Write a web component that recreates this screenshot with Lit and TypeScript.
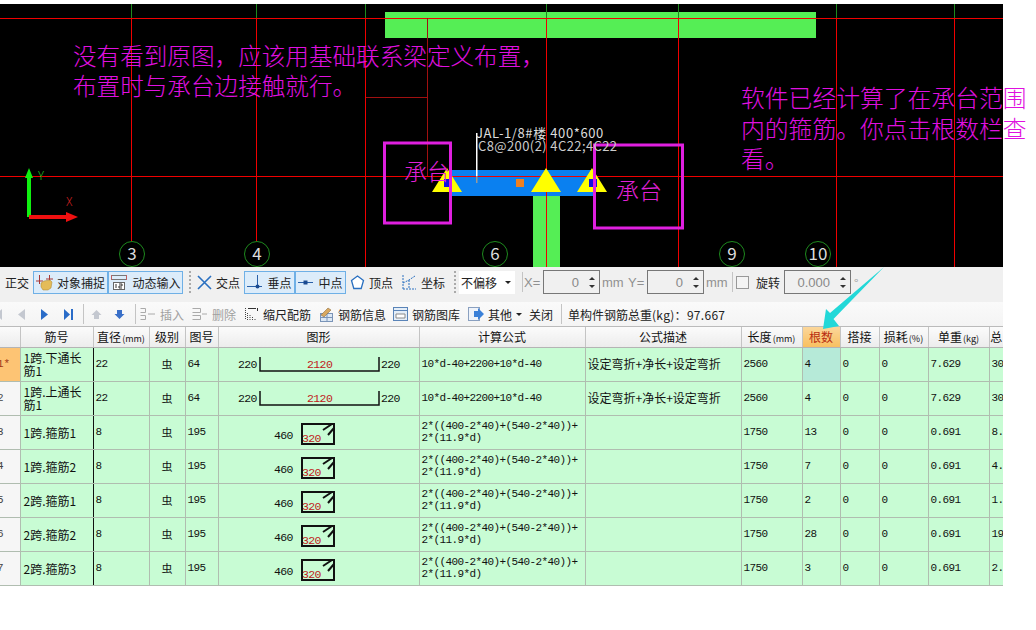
import { LitElement, html, css, svg } from 'lit';
import { customElement } from 'lit/decorators.js';

const columns = [
  { label: '', w: 20 },
  { label: '筋号', w: 73 },
  { label: '直径', unit: '(mm)', w: 56 },
  { label: '级别', w: 36 },
  { label: '图号', w: 33 },
  { label: '图形', w: 201 },
  { label: '计算公式', w: 166 },
  { label: '公式描述', w: 156 },
  { label: '长度', unit: '(mm)', w: 61 },
  { label: '根数', w: 38 },
  { label: '搭接', w: 39 },
  { label: '损耗', unit: '(%)', w: 49 },
  { label: '单重', unit: '(kg)', w: 61 },
  { label: '总', w: 14 },
];

const STIRRUP_FORMULA = ['2*((400-2*40)+(540-2*40))+', '2*(11.9*d)'];

const rows = [
  { no: '1*', name: ['1跨.下通长', '筋1'], dia: 22, fig: 64, bent: true, formula: ['10*d-40+2200+10*d-40'], desc: '设定弯折+净长+设定弯折', len: 2560, count: 4, weight: '7.629', total: '30' },
  { no: '2', name: ['1跨.上通长', '筋1'], dia: 22, fig: 64, bent: true, formula: ['10*d-40+2200+10*d-40'], desc: '设定弯折+净长+设定弯折', len: 2560, count: 4, weight: '7.629', total: '30' },
  { no: '3', name: ['1跨.箍筋1'], dia: 8, fig: 195, bent: false, formula: STIRRUP_FORMULA, desc: '', len: 1750, count: 13, weight: '0.691', total: '8.' },
  { no: '4', name: ['1跨.箍筋2'], dia: 8, fig: 195, bent: false, formula: STIRRUP_FORMULA, desc: '', len: 1750, count: 7, weight: '0.691', total: '4.' },
  { no: '5', name: ['2跨.箍筋1'], dia: 8, fig: 195, bent: false, formula: STIRRUP_FORMULA, desc: '', len: 1750, count: 2, weight: '0.691', total: '1.' },
  { no: '6', name: ['2跨.箍筋2'], dia: 8, fig: 195, bent: false, formula: STIRRUP_FORMULA, desc: '', len: 1750, count: 28, weight: '0.691', total: '19' },
  { no: '7', name: ['2跨.箍筋3'], dia: 8, fig: 195, bent: false, formula: STIRRUP_FORMULA, desc: '', len: 1750, count: 3, weight: '0.691', total: '2.' },
];

const axes = [
  { x: 132, label: '3' },
  { x: 257, label: '4' },
  { x: 495, label: '6' },
  { x: 732, label: '9' },
  { x: 818, label: '10' },
];

// grid lines run green above the top datum, red below it
const gridX = [131.5, 256.5, 365.5, 546.5, 678.5, 836.5, 954.5];

const triangle = (cx: number, top: number) =>
  svg`<polygon points="${cx},${top} ${cx + 15},${top + 24} ${cx - 15},${top + 24}" fill="#ffff00" />`;

@customElement('app-root')
export class AppRoot extends LitElement {
  static styles = css`
    :host {
      display: block;
      position: relative;
      width: 1036px;
      height: 630px;
      padding-top: 4px;
      box-sizing: border-box;
      background: #fff;
      overflow: hidden;
      font-family: 'Noto Sans CJK SC', 'Liberation Sans', sans-serif;
      font-size: 12px;
      color: #222;
    }
    .canvas {
      display: block;
      width: 1003px;
      height: 263px;
      overflow: visible;
    }
    .canvas text {
      font-family: 'Noto Sans CJK SC', sans-serif;
    }
    .note {
      font-size: 23.6px;
      fill: #e010e0;
      font-weight: 300;
    }
    .note.wide {
      font-size: 23.8px;
    }
    .cap {
      font-size: 23px;
      fill: #e020d8;
      font-weight: 300;
    }
    .panel {
      width: 1003px;
    }
    .bar {
      display: flex;
      align-items: center;
      white-space: nowrap;
    }
    .bar1 {
      height: 35px;
      background: #f0f0f0;
      padding: 0 0 5px 5px;
      box-sizing: border-box;
    }
    .bar2 {
      height: 25px;
      background: linear-gradient(#fafafa, #f4f4f4);
      border-bottom: 1px solid #bbb;
      box-sizing: border-box;
      overflow: hidden;
    }
    .tool {
      display: flex;
      align-items: center;
      gap: 4px;
      height: 23px;
      box-sizing: border-box;
      flex: none;
    }
    .on {
      background: #dcecfa;
      border: 1px solid #6fb0e6;
      justify-content: center;
    }
    .dots {
      width: 0;
      height: 22px;
      border-left: 2px dotted #aaa;
      flex: none;
    }
    .sep {
      width: 1px;
      height: 20px;
      background: #c4c4c4;
      flex: none;
    }
    .muted {
      color: #a0a0a0;
    }
    .latin {
      font-family: 'Liberation Sans', sans-serif;
      font-size: 13px;
      color: #909090;
      box-sizing: border-box;
      flex: none;
    }
    .unit {
      width: 28px;
      padding-left: 2px;
    }
    .coord {
      width: 19px;
    }
    .select {
      width: 56px;
      height: 23px;
      background: #fff;
      display: flex;
      align-items: center;
      justify-content: space-between;
      padding: 0 4px 0 2px;
      box-sizing: border-box;
      flex: none;
    }
    .caret {
      width: 0;
      height: 0;
      border-left: 3px solid transparent;
      border-right: 3px solid transparent;
      border-top: 3px solid #222;
    }
    .spin {
      display: flex;
      align-items: center;
      justify-content: flex-end;
      height: 24px;
      border: 1px solid #777;
      background: #f0f0f0;
      box-sizing: border-box;
      color: #888;
      font-family: 'Liberation Sans', sans-serif;
      font-size: 13px;
      flex: none;
    }
    .spin b {
      display: flex;
      flex-direction: column;
      justify-content: center;
      gap: 5px;
      width: 15px;
      align-items: center;
      margin-left: 5px;
    }
    .spin i {
      width: 0;
      height: 0;
      border-left: 3px solid transparent;
      border-right: 3px solid transparent;
    }
    .spin i.up {
      border-bottom: 3px solid #333;
    }
    .spin i.down {
      border-top: 3px solid #333;
    }
    .check {
      width: 11px;
      height: 11px;
      border: 1px solid #999;
      background: #f4f4f4;
      flex: none;
    }
    .total {
      letter-spacing: 0.3px;
    }
    table {
      border-collapse: collapse;
      table-layout: fixed;
      width: 1003px;
      font-family: 'Liberation Mono', 'Noto Sans CJK SC', monospace;
      font-size: 11px;
      letter-spacing: -0.6px;
      color: #111;
    }
    th {
      height: 20px;
      padding: 0;
      overflow: hidden;
      white-space: nowrap;
      font-family: 'Noto Sans CJK SC', sans-serif;
      font-size: 12px;
      font-weight: 400;
      letter-spacing: 0;
      background: linear-gradient(#fbfbfb, #ececec);
      border-right: 1px solid #c4c4c4;
      border-bottom: 1px solid #b4b4b4;
      box-sizing: border-box;
    }
    th small {
      font-size: 9px;
      margin-left: 1px;
    }
    th.hot {
      background: linear-gradient(#fbd69a, #f8c060);
      color: #b82c10;
    }
    td {
      height: 34px;
      padding: 0 0 0 2px;
      overflow: hidden;
      white-space: nowrap;
      background: #c8fcd4;
      border-right: 1px solid #b0bdb0;
      border-bottom: 1px solid #b0bdb0;
      box-sizing: border-box;
      line-height: 12px;
    }
    th:last-child,
    td:last-child {
      border-right: 0;
    }
    td.no {
      background: #f6f6f6;
      padding: 0;
      color: #444;
      text-indent: -3px;
      letter-spacing: 0;
    }
    td.no.active {
      background: #fdc474;
      color: #a03818;
    }
    td.name {
      font-family: 'Noto Sans CJK SC', sans-serif;
      font-size: 12px;
      letter-spacing: 0;
      border-right: 1px solid #111;
      padding-left: 3px;
    }
    td.name div {
      line-height: 13px;
    }
    td.grade {
      text-align: center;
      padding: 0;
      font-family: 'Noto Sans CJK SC', sans-serif;
      font-size: 11px;
      letter-spacing: 0;
    }
    td.zh {
      font-family: 'Noto Sans CJK SC', sans-serif;
      font-size: 12px;
      letter-spacing: 0;
    }
    td.shape {
      padding: 0;
    }
    td.shape svg {
      display: block;
    }
    td.shape text {
      font-family: 'Liberation Mono', monospace;
      font-size: 11.5px;
      letter-spacing: -0.6px;
    }
    td.picked {
      background: #b6ead8;
    }
    .callout {
      position: absolute;
      left: 815px;
      top: 262px;
    }
  `;

  renderCanvas() {
    return html`<svg class="canvas" viewBox="0 4 1003 263">
      <rect x="0" y="4" width="1003" height="263" fill="#000" />
      <rect x="385" y="12" width="431" height="26" fill="#55ee55" />
      <rect x="533" y="196" width="27" height="71" fill="#55ee55" />
      <rect x="451" y="170" width="142" height="26" fill="#0a80f0" />
      ${gridX.map(
        (x) => svg`<path d="M${x} 4V18" stroke="#1e8a1e" fill="none" />
          <path d="M${x} 18V267" stroke="#f00000" fill="none" />`
      )}
      <path d="M0 18.5H1003M0 176.5H1003" stroke="#f00000" fill="none" />
      <path d="M427.5 18V176M366 97.500H427" stroke="#a01010" fill="none" />
      <rect x="476" y="133" width="1.500" height="43" fill="#fff" />
      <rect x="476" y="176" width="1.500" height="7" fill="#999" />
      ${triangle(447, 168)} ${triangle(546, 168)} ${triangle(592, 168)}
      <rect x="444" y="179" width="8" height="8" fill="#1010e0" />
      <rect x="589" y="179" width="8" height="8" fill="#1010e0" />
      <rect x="516" y="179" width="8" height="8" fill="#f08020" />
      <g fill="none" stroke="#e020e0" stroke-width="3">
        <rect x="384.500" y="143" width="66" height="80" />
        <rect x="594.500" y="145" width="88" height="83" />
      </g>
      <text x="476" y="138" font-size="13" fill="#ddd" letter-spacing="0.6">JAL-1/8#楼 400*600</text>
      <text x="478" y="151" font-size="13" fill="#ccc" letter-spacing="0.4">C8@200(2) 4C22;4C22</text>
      <text class="note" x="73" y="65">没有看到原图，应该用基础联系梁定义布置，</text>
      <text class="note" x="73" y="95">布置时与承台边接触就行。</text>
      <text class="note wide" x="741" y="107">软件已经计算了在承台范围</text>
      <text class="note wide" x="741" y="138">内的箍筋。你点击根数栏查</text>
      <text class="note wide" x="741" y="168">看。</text>
      <text class="cap" x="404" y="180">承台</text>
      <text class="cap" x="616" y="199">承台</text>
      <path d="M29 217V176" stroke="#10f010" stroke-width="4" />
      <polygon points="29,168 33,178 25,178" fill="#10f010" />
      <path d="M29 217H70" stroke="#f01010" stroke-width="4" />
      <polygon points="78,217 66,212 66,222" fill="#f01010" />
      <text x="38" y="180" font-size="12" font-weight="300" fill="#20c020">Y</text>
      <text x="66" y="206" font-size="12" font-weight="300" fill="#d02020">X</text>
      ${axes.map(
        (a) => svg`<circle cx="${a.x}" cy="254" r="12.500" fill="#000" stroke="#1e8a1e" />
          <text x="${a.x}" y="260" text-anchor="middle" font-size="17" fill="#ddd">${a.label}</text>`
      )}
    </svg>`;
  }

  renderBar1() {
    return html`<div class="bar bar1">
      <span style="width:28px">正交</span>
      <div class="tool on" style="width:75px">
        <svg width="17" height="17" viewBox="0 0 17 17">
          <path d="M3.500 1v9M13.500 1v6" stroke="#a83838" />
          <path d="M0 7h7M10 5h7" stroke="#a83838" />
          <path d="M5 9l3-2 6-1 2 2-1 6-3 2H7l-2-3z" fill="#e4bc58" stroke="#a88430" stroke-width=".5" />
        </svg>
        对象捕捉
      </div>
      <div class="tool on" style="width:75px">
        <svg width="18" height="16" viewBox="0 0 18 16">
          <path d="M1 1.500h16M1 5.500h16" stroke="#777" />
          <path d="M1.500 1v5M16.500 1v5" stroke="#c06060" />
          <rect x="3.500" y="8.500" width="11" height="7" fill="#fff" stroke="#666" />
          <path d="M6 10v4M9 10h3v2H9v2h3" stroke="#333" fill="none" />
        </svg>
        动态输入
      </div>
      <div class="dots" style="margin:0 6px"></div>
      <div class="tool" style="width:47px">
        <svg width="15" height="15" viewBox="0 0 15 15">
          <path d="M1 1l13 13M14 1L1 14" stroke="#2a70c0" stroke-width="1.600" />
        </svg>
        交点
      </div>
      <div class="tool on" style="width:51px">
        <svg width="16" height="15" viewBox="0 0 16 15">
          <path d="M0 11.500h15M10.500 0v11" stroke="#2a60a8" />
          <circle cx="10.500" cy="11.500" r="2" fill="#1a4a90" />
        </svg>
        垂点
      </div>
      <div class="tool on" style="width:51px">
        <svg width="16" height="15" viewBox="0 0 16 15">
          <path d="M0 7.500h15" stroke="#2a60a8" />
          <rect x="5.500" y="5.500" width="4" height="4" fill="#1a4a90" />
        </svg>
        中点
      </div>
      <div class="tool" style="width:47px;margin-left:4px">
        <svg width="15" height="15" viewBox="0 0 15 15">
          <path d="M7.500 1l6 4.500-2.300 8h-7.400l-2.300-8z" fill="#fff" stroke="#2a70c0" stroke-width="1.300" />
        </svg>
        顶点
      </div>
      <div class="tool" style="width:50px;margin-left:3px">
        <svg width="17" height="16" viewBox="0 0 17 16">
          <path d="M3 1v14M3 15h13M3 9l6-3 6-4M9 6v9" stroke="#2a70c0" stroke-dasharray="2 1" fill="none" />
        </svg>
        坐标
      </div>
      <div class="dots" style="margin:0 3px 0 4px"></div>
      <div class="select">不偏移<span class="caret"></span></div>
      <div class="sep" style="margin:0 1px 0 7px"></div>
      <span class="latin coord">X=</span>
      <div class="spin" style="width:57px">0<b><i class="up"></i><i class="down"></i></b></div>
      <span class="latin unit">mm</span>
      <span class="latin coord">Y=</span>
      <div class="spin" style="width:57px">0<b><i class="up"></i><i class="down"></i></b></div>
      <span class="latin unit">mm</span>
      <div class="sep" style="margin-right:3px"></div>
      <div class="check"></div>
      <span style="margin:0 4px 0 7px">旋转</span>
      <div class="spin" style="width:67px">0.000<b><i class="up"></i><i class="down"></i></b></div>
      <span class="muted" style="margin-left:3px">°</span>
    </div>`;
  }

  renderBar2() {
    return html`<div class="bar bar2">
      <div class="tool" style="width:17px">
        <svg width="10" height="13" viewBox="0 0 10 13" style="margin-left:-8px"><path d="M10 1v11L4 6.500zM3 1H1v11h2z" fill="#c4c8d0" /></svg>
      </div>
      <div class="tool" style="width:23px">
        <svg width="10" height="13" viewBox="0 0 10 13"><path d="M8 1v11L1 6.500z" fill="#c4c8d0" /></svg>
      </div>
      <div class="tool" style="width:24px">
        <svg width="10" height="13" viewBox="0 0 10 13"><path d="M1 1v11l7-5.500z" fill="#2a6cc8" /></svg>
      </div>
      <div class="tool" style="width:19px">
        <svg width="10" height="13" viewBox="0 0 10 13"><path d="M0 1v11l6-5.500zM7 1h2v11H7z" fill="#2a6cc8" /></svg>
      </div>
      <div class="sep" style="margin-right:7px"></div>
      <div class="tool" style="width:23px">
        <svg width="11" height="11" viewBox="0 0 11 11"><path d="M5.500 1l5 5H8v4H3V6H.5z" fill="#c4c8d0" /></svg>
      </div>
      <div class="tool" style="width:21px">
        <svg width="11" height="11" viewBox="0 0 11 11"><path d="M5.500 10l5-5H8V1H3v4H.5z" fill="#3a70c8" /></svg>
      </div>
      <div class="sep" style="margin-right:4px"></div>
      <div class="tool muted" style="width:52px">
        <svg width="16" height="14" viewBox="0 0 16 14"><path d="M.5 1.500h5v4h-5M.5 8.500h5v4h-5M8 7h7" stroke="#aaa" fill="none" /></svg>
        插入
      </div>
      <div class="tool muted" style="width:53px">
        <svg width="16" height="14" viewBox="0 0 16 14"><path d="M.5 1.500h8v4h-8M.5 8.500h8v4h-8M10 7h5" stroke="#aaa" fill="none" /></svg>
        删除
      </div>
      <div class="tool" style="width:74px">
        <svg width="14" height="14" viewBox="0 0 14 14"><path d="M.5 1v12M2.500 13V6M5 13V8M7.500 13v-3M10 13v-2" stroke="#444" fill="none" stroke-dasharray="1 1" /><path d="M3 1.500h8M12.500 1v3" stroke="#333" fill="none" /></svg>
        缩尺配筋
      </div>
      <div class="tool" style="width:74px">
        <svg width="15" height="15" viewBox="0 0 15 15"><rect x="1.500" y="6.500" width="12" height="8" fill="#dce8f4" stroke="#7a94b8" /><path d="M8 6.500v8M1.500 10.500h12" stroke="#7a94b8" /><path d="M2 8l7-7 3 2-7 7z" fill="#d8a860" stroke="#806030" stroke-width=".5" /></svg>
        钢筋信息
      </div>
      <div class="tool" style="width:75px">
        <svg width="15" height="14" viewBox="0 0 15 14"><rect x=".5" y=".5" width="14" height="13" fill="#e4eef8" stroke="#5a84b8" /><path d="M.5 3.500h14" stroke="#5a84b8" /><path d="M3 7h9v4H3z" fill="#fff" stroke="#8a8a8a" /></svg>
        钢筋图库
      </div>
      <div class="tool" style="width:61px">
        <svg width="16" height="14" viewBox="0 0 16 14"><rect x=".5" y=".5" width="11" height="13" fill="#eef3fa" stroke="#8aa0c0" /><path d="M6 4h4V1l6 6-6 6v-3H6z" fill="#3a80d8" /></svg>
        其他<span class="caret"></span>
      </div>
      <span style="width:32px">关闭</span>
      <div class="sep" style="margin-right:6px"></div>
      <span>单构件钢筋总重<span class="total">(kg)：97.667</span></span>
    </div>`;
  }

  renderShape(bent: boolean) {
    if (bent) {
      return html`<svg width="200" height="33" viewBox="0 0 200 33">
        <text x="19" y="20" fill="#111">220</text>
        <path d="M41 9V23H160V9" fill="none" stroke="#111" stroke-width="1.500" />
        <text x="88" y="20" fill="#c02020">2120</text>
        <text x="162" y="20" fill="#111">220</text>
      </svg>`;
    }
    return html`<svg width="200" height="33" viewBox="0 0 200 33">
      <text x="55" y="23" fill="#111">460</text>
      <path d="M83 8H115V28H83Z" fill="none" stroke="#111" stroke-width="2" />
      <path d="M104 14l9-6M109 19l6-7" fill="none" stroke="#111" stroke-width="2" />
      <text x="83" y="26" fill="#c02020">320</text>
    </svg>`;
  }

  renderTable() {
    return html`<table>
      <colgroup>${columns.map((c) => html`<col style="width:${c.w}px" />`)}</colgroup>
      <tr>
        ${columns.map(
          (c) => html`<th class="${c.label === '根数' ? 'hot' : ''}">${c.label}${c.unit ? html`<small>${c.unit}</small>` : ''}</th>`
        )}
      </tr>
      ${rows.map(
        (r, i) => html`<tr>
          <td class="no ${i === 0 ? 'active' : ''}">${r.no}</td>
          <td class="name">${r.name.map((n) => html`<div>${n}</div>`)}</td>
          <td>${r.dia}</td>
          <td class="grade">虫</td>
          <td>${r.fig}</td>
          <td class="shape">${this.renderShape(r.bent)}</td>
          <td>${r.formula.map((f) => html`<div>${f}</div>`)}</td>
          <td class="zh">${r.desc}</td>
          <td>${r.len}</td>
          <td class="${i === 0 ? 'picked' : ''}">${r.count}</td>
          <td>0</td>
          <td>0</td>
          <td>${r.weight}</td>
          <td>${r.total}</td>
        </tr>`
      )}
    </table>`;
  }

  render() {
    return html`
      ${this.renderCanvas()}
      <div class="panel">${this.renderBar1()} ${this.renderBar2()} ${this.renderTable()}</div>
      <svg class="callout" width="75" height="70" viewBox="815 262 75 70">
        <polygon points="823,329 839,326 833.500,319 884,267 830,313 826,309" fill="#22d8d8" />
      </svg>
    `;
  }
}
